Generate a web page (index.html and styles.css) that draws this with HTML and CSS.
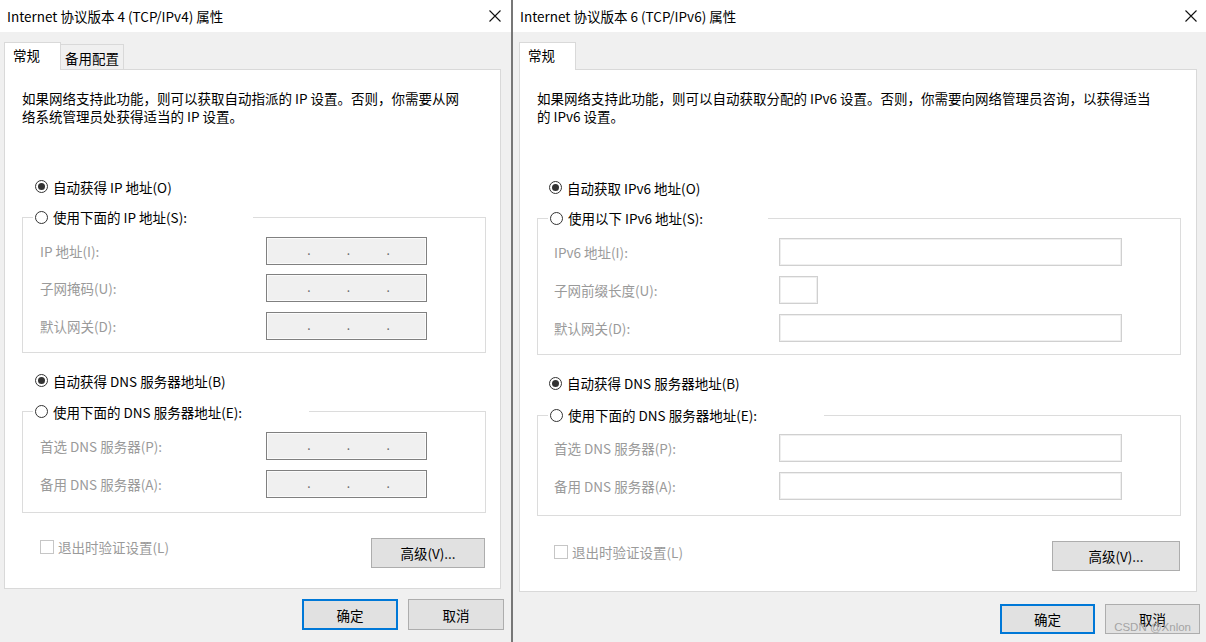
FILE: index.html
```html
<!DOCTYPE html>
<html lang="zh-CN">
<head>
<meta charset="utf-8">
<title>TCP/IP 属性</title>
<link rel="stylesheet" href="styles.css">
</head>
<body>
<div class="screen">
  <section class="dialog dialog--v4">
    <header class="titlebar">
      <span class="title">Internet 协议版本 4 (TCP/IPv4) 属性</span>
      <svg class="close" viewBox="0 0 12 12" aria-hidden="true"><path d="M0.5 0.5L11.5 11.5M11.5 0.5L0.5 11.5" stroke="#111" stroke-width="1.1" fill="none"/></svg>
    </header>
    <div class="dialog-body">
      <div class="tabs">
        <div class="tab tab--active">常规</div>
        <div class="tab">备用配置</div>
      </div>
      <div class="panel">
        <p class="intro">如果网络支持此功能，则可以获取自动指派的 IP 设置。否则，你需要从网<br>络系统管理员处获得适当的 IP 设置。</p>
        <div class="radio-row radio-row--ip"><span class="radio radio--on"></span><span>自动获得 IP 地址(O)</span></div>
        <fieldset class="group group--ip">
          <legend class="legend legend--narrow"><span class="radio"></span><span>使用下面的 IP 地址(S):</span></legend>
          <div class="fields">
            <div class="field"><span class="field-label">IP 地址(I):</span><span class="ipbox"><span class="dot">.</span><span class="dot">.</span><span class="dot">.</span></span></div>
            <div class="field"><span class="field-label">子网掩码(U):</span><span class="ipbox"><span class="dot">.</span><span class="dot">.</span><span class="dot">.</span></span></div>
            <div class="field"><span class="field-label">默认网关(D):</span><span class="ipbox"><span class="dot">.</span><span class="dot">.</span><span class="dot">.</span></span></div>
          </div>
        </fieldset>
        <div class="radio-row radio-row--dns"><span class="radio radio--on"></span><span>自动获得 DNS 服务器地址(B)</span></div>
        <fieldset class="group group--dns">
          <legend class="legend legend--wide"><span class="radio"></span><span>使用下面的 DNS 服务器地址(E):</span></legend>
          <div class="fields">
            <div class="field"><span class="field-label">首选 DNS 服务器(P):</span><span class="ipbox"><span class="dot">.</span><span class="dot">.</span><span class="dot">.</span></span></div>
            <div class="field"><span class="field-label">备用 DNS 服务器(A):</span><span class="ipbox"><span class="dot">.</span><span class="dot">.</span><span class="dot">.</span></span></div>
          </div>
        </fieldset>
        <div class="panel-foot">
          <span class="check"><span class="checkbox"></span><span>退出时验证设置(L)</span></span>
          <button class="btn btn--adv" type="button">高级(V)...</button>
        </div>
      </div>
      <div class="actions">
        <button class="btn btn--primary" type="button">确定</button>
        <button class="btn" type="button">取消</button>
      </div>
    </div>
  </section>

  <section class="dialog dialog--v6">
    <header class="titlebar">
      <span class="title">Internet 协议版本 6 (TCP/IPv6) 属性</span>
      <svg class="close" viewBox="0 0 12 12" aria-hidden="true"><path d="M0.5 0.5L11.5 11.5M11.5 0.5L0.5 11.5" stroke="#111" stroke-width="1.1" fill="none"/></svg>
    </header>
    <div class="dialog-body">
      <div class="tabs">
        <div class="tab tab--active">常规</div>
      </div>
      <div class="panel">
        <p class="intro">如果网络支持此功能，则可以自动获取分配的 IPv6 设置。否则，你需要向网络管理员咨询，以获得适当<br>的 IPv6 设置。</p>
        <div class="radio-row radio-row--ip"><span class="radio radio--on"></span><span>自动获取 IPv6 地址(O)</span></div>
        <fieldset class="group group--ip">
          <legend class="legend legend--narrow"><span class="radio"></span><span>使用以下 IPv6 地址(S):</span></legend>
          <div class="fields">
            <div class="field"><span class="field-label">IPv6 地址(I):</span><span class="v6box"></span></div>
            <div class="field"><span class="field-label">子网前缀长度(U):</span><span class="v6box v6box--short"></span></div>
            <div class="field"><span class="field-label">默认网关(D):</span><span class="v6box"></span></div>
          </div>
        </fieldset>
        <div class="radio-row radio-row--dns"><span class="radio radio--on"></span><span>自动获得 DNS 服务器地址(B)</span></div>
        <fieldset class="group group--dns">
          <legend class="legend legend--wide"><span class="radio"></span><span>使用下面的 DNS 服务器地址(E):</span></legend>
          <div class="fields">
            <div class="field"><span class="field-label">首选 DNS 服务器(P):</span><span class="v6box"></span></div>
            <div class="field"><span class="field-label">备用 DNS 服务器(A):</span><span class="v6box"></span></div>
          </div>
        </fieldset>
        <div class="panel-foot">
          <span class="check"><span class="checkbox"></span><span>退出时验证设置(L)</span></span>
          <button class="btn btn--adv" type="button">高级(V)...</button>
        </div>
      </div>
      <div class="actions">
        <button class="btn btn--primary" type="button">确定</button>
        <button class="btn" type="button">取消</button>
      </div>
    </div>
  </section>
  <div class="watermark">CSDN @Xnlon</div>
</div>
</body>
</html>
```

FILE: styles.css
```css
* { box-sizing: border-box; }
html, body { margin: 0; padding: 0; }
body {
  width: 1206px;
  height: 642px;
  overflow: hidden;
  background: #f0f0f0;
  font-family: "Noto Sans CJK SC", "Microsoft YaHei", "Noto Sans", sans-serif;
  font-size: 13.5px;
  color: #000;
}
.screen { display: flex; height: 642px; position: relative; }

.dialog { display: flex; flex-direction: column; background: #f0f0f0; height: 100%; }
.dialog--v4 { width: 513px; flex: none; border-right: 2px solid #777; }
.dialog--v6 { flex: 1; }

.titlebar {
  height: 32px;
  flex: none;
  background: #fff;
  display: flex;
  align-items: center;
  justify-content: space-between;
  padding: 0 10px 0 7px;
}
.dialog--v6 .titlebar { padding-right: 9px; }
.title { line-height: 20px; white-space: nowrap; }
.close { width: 12px; height: 12px; display: block; }

.dialog-body { padding: 10px 10px 0 4px; }
.dialog--v6 .dialog-body { padding: 10px 9px 0 6px; }

.tabs { display: flex; align-items: flex-end; height: 27px; }
.tab {
  height: 25px;
  padding: 0 4px;
  border: 1px solid #d9d9d9;
  border-bottom: none;
  border-left: none;
  background: #f0f0f0;
  line-height: 26px;
  white-space: nowrap;
}
.tab--active {
  width: 57px;
  height: 28px;
  margin-bottom: -1px;
  padding-left: 8px;
  border-left: 1px solid #d9d9d9;
  background: #fff;
  line-height: 25px;
  position: relative;
  z-index: 1;
}

.panel {
  background: #fff;
  border: 1px solid #d9d9d9;
  height: 520px;
  padding: 0 14px 0 17px;
  display: flex;
  flex-direction: column;
}
.dialog--v6 .panel { height: 523px; padding-right: 15px; }

.intro { margin: 18.5px 0 0; line-height: 18.5px; white-space: nowrap; }

.radio-row { display: flex; align-items: center; gap: 5px; height: 20px; line-height: 20px; white-space: nowrap; }
.radio-row--ip { margin-top: 51px; padding-left: 13px; }
.radio-row--dns { margin-top: 18px; padding-left: 13px; }
.dialog--v6 .radio-row--ip { margin-top: 52px; padding-left: 12px; }
.dialog--v6 .radio-row--dns { padding-left: 12px; }

.radio {
  width: 13px;
  height: 13px;
  flex: none;
  border: 1px solid #333;
  border-radius: 50%;
  background: #fff;
  display: flex;
  align-items: center;
  justify-content: center;
}
.radio--on::after { content: ""; width: 7px; height: 7px; border-radius: 50%; background: #333; }

.group {
  margin: 10.5px 0 0;
  padding: 9.5px 0 12px 0;
  border: 1px solid #dcdcdc;
  min-width: 0;
}
.group--dns { margin-top: 11px; padding-top: 10px; padding-bottom: 14px; }
.dialog--v6 .group--ip { padding-top: 10px; }
.dialog--v6 .group--dns { margin-top: 12px; padding-top: 9px; padding-bottom: 15px; }

.legend {
  margin-left: 10px;
  padding: 0 0 0 2px;
  height: 20px;
  line-height: 20px;
  display: flex;
  align-items: center;
  gap: 5px;
  white-space: nowrap;
}
.legend--narrow { width: 220px; }
.legend--wide { width: 276px; }

.fields { display: flex; flex-direction: column; gap: 9.7px; padding-left: 17px; }
.dialog--v6 .fields { gap: 10px; padding-left: 16px; }
.field { display: flex; align-items: center; height: 28px; }
.field-label { width: 226px; flex: none; color: #9a9a9a; white-space: nowrap; }
.dialog--v6 .field-label { width: 225px; }

.ipbox {
  width: 161px;
  height: 28px;
  border: 1px solid #808080;
  box-shadow: inset 0 0 0 1px #fbfbfb;
  background: #f0f0f0;
  display: flex;
  justify-content: space-evenly;
  padding-left: 4px;
  line-height: 24px;
  color: #6a6a6a;
}
.dot { font-size: 12px; }

.v6box {
  width: 343px;
  height: 28px;
  border: 1px solid #d0d0d0;
  box-shadow: inset 0 0 0 1px #efefef;
  background: #fff;
}
.v6box--short { width: 39px; }

.panel-foot {
  margin-top: 25px;
  display: flex;
  justify-content: space-between;
  align-items: flex-start;
  padding: 0 1px 0 18px;
}
.dialog--v6 .panel-foot { padding-left: 17px; }
.check { display: flex; align-items: center; gap: 4px; line-height: 18px; color: #9a9a9a; white-space: nowrap; }
.dialog--v6 .check { margin-top: 2px; }
.checkbox { width: 14px; height: 14px; border: 1px solid #c6c6c6; background: #fff; flex: none; }

.btn {
  font: inherit;
  color: #000;
  background: #e1e1e1;
  border: 1px solid #adadad;
  height: 30px;
  padding: 0;
  line-height: 28px;
  text-align: center;
}
.btn--adv { width: 114px; }
.dialog--v6 .btn--adv { width: 128px; }

.actions { display: flex; justify-content: flex-end; gap: 10px; margin: 10px -3px 0 0; }
.actions .btn { width: 96px; height: 31px; }
.dialog--v6 .actions { margin-top: 12px; }
.dialog--v6 .actions .btn { width: 95px; height: 30px; }
.btn--primary { border-color: #0078d7; box-shadow: inset 0 0 0 1px #0078d7; }

.watermark {
  position: absolute;
  right: 15px;
  bottom: 8px;
  font-family: "Liberation Sans", sans-serif;
  font-size: 11.5px;
  line-height: 13px;
  color: #a4a4a4;
}
```
